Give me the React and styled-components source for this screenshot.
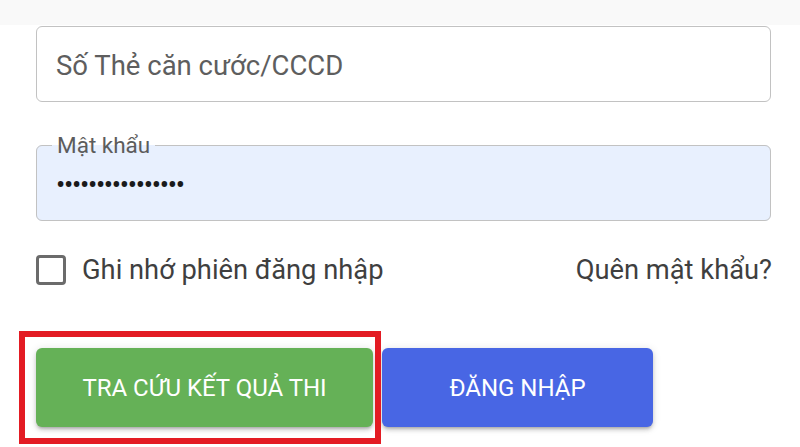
import React, { useState } from "react";
import styled, { createGlobalStyle } from "styled-components";

const GlobalStyle = createGlobalStyle`
  html, body {
    margin: 0;
    padding: 0;
    background: #ffffff;
    font-family: Roboto, "Noto Sans", "Liberation Sans", sans-serif;
  }
  * { box-sizing: border-box; }
`;

const Page = styled.div`
  width: 800px;
  height: 447px;
  overflow: hidden;
  background: #ffffff;
`;

const TopStrip = styled.div`
  height: 25px;
  background: #f9f9f9;
`;

const Form = styled.form`
  display: flex;
  flex-direction: column;
  padding: 1px 29px 0 36px;
`;

const Field = styled.div`
  position: relative;
  height: 76px;
  padding: 0 20px;
  border-radius: 6px;
  background: ${(p) => (p.$filled ? "#e8f0fe" : "#ffffff")};
  display: flex;
  align-items: center;
  margin-top: ${(p) => p.$top || 0}px;
`;

// notched outline, sits over the field like a material text field
const Outline = styled.fieldset`
  position: absolute;
  left: 0;
  right: 0;
  bottom: 0;
  top: ${(p) => (p.$notched ? "-12px" : "0")};
  margin: 0;
  padding: 0 15px;
  border: 1.5px solid #c2c2c2;
  border-radius: 6px;
  pointer-events: none;
`;

const Legend = styled.legend`
  font-size: 22.5px;
  line-height: 24px;
  height: 24px;
  color: #5c5c5c;
  padding: 0 5px;
`;

const Input = styled.input`
  position: relative;
  border: none;
  outline: none;
  background: transparent;
  width: 100%;
  font-family: inherit;
  font-size: 27.5px;
  color: #1a1a1a;
  padding: 0;
  margin-top: ${(p) => p.$shift || 0}px;
  letter-spacing: ${(p) => (p.type === "password" ? "-1.3px" : "0")};

  &::placeholder {
    color: #5e5e5e;
    opacity: 1;
  }
`;

const OptionsRow = styled.div`
  display: flex;
  align-items: center;
  justify-content: space-between;
  margin-top: 34px;
  height: 30px;
`;

const CheckLabel = styled.label`
  display: flex;
  align-items: center;
  gap: 16px;
  font-size: 27.3px;
  color: #3f3f3f;
  cursor: pointer;
`;

const Box = styled.span`
  width: 30px;
  height: 30px;
  border: 3px solid #6b6b6b;
  border-radius: 4px;
  background: ${(p) => (p.$checked ? "#6b6b6b" : "transparent")};
`;

const Link = styled.a`
  font-size: 27.3px;
  color: #3f3f3f;
  text-decoration: none;
  margin-right: -1px;
`;

const ButtonRow = styled.div`
  display: flex;
  gap: 9px;
  margin-top: 63px;
`;

const Highlight = styled.div`
  position: relative;
  display: flex;

  &::after {
    content: "";
    position: absolute;
    left: -17px;
    top: -17px;
    right: -8px;
    bottom: -17px;
    border: 6px solid #e31b23;
    pointer-events: none;
  }
`;

const Button = styled.button`
  height: 79px;
  width: ${(p) => p.$w}px;
  border: none;
  border-radius: 6px;
  background: ${(p) => p.$bg};
  color: #ffffff;
  font-family: inherit;
  font-size: 24px;
  font-weight: 400;
  text-transform: uppercase;
  box-shadow: 0 3px 3px -2px rgba(0, 0, 0, 0.2), 0 3px 4px 0 rgba(0, 0, 0, 0.14),
    0 1px 8px 0 rgba(0, 0, 0, 0.12);
  cursor: pointer;
`;

export default function App() {
  const [remember, setRemember] = useState(false);

  return (
    <Page>
      <GlobalStyle />
      <TopStrip />
      <Form onSubmit={(e) => e.preventDefault()}>
        <Field>
          <Input placeholder="Số Thẻ căn cước/CCCD" $shift={2} />
          <Outline />
        </Field>
        <Field $filled $top={43}>
          <Input type="password" defaultValue="1234567890123456" $shift={2} />
          <Outline $notched>
            <Legend>Mật khẩu</Legend>
          </Outline>
        </Field>
        <OptionsRow>
          <CheckLabel onClick={() => setRemember(!remember)}>
            <Box $checked={remember} />
            Ghi nhớ phiên đăng nhập
          </CheckLabel>
          <Link href="#">Quên mật khẩu?</Link>
        </OptionsRow>
        <ButtonRow>
          <Highlight>
            <Button type="button" $w={337} $bg="#65b157">
              Tra cứu kết quả thi
            </Button>
          </Highlight>
          <Button type="submit" $w={271} $bg="#4866e4">
            Đăng nhập
          </Button>
        </ButtonRow>
      </Form>
    </Page>
  );
}
